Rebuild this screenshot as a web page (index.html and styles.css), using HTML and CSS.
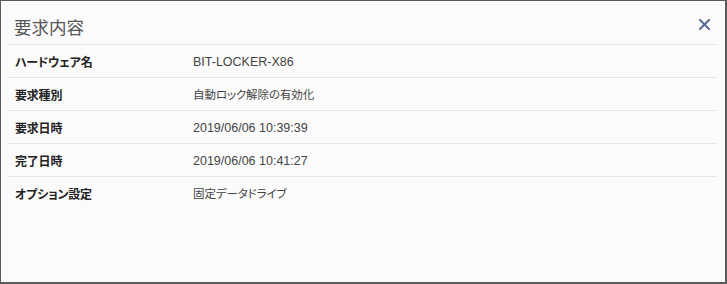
FILE: index.html
```html
<!DOCTYPE html>
<html lang="ja">
<head>
<meta charset="utf-8">
<title>要求内容</title>
<link rel="stylesheet" href="styles.css">
</head>
<body>
<div class="modal">
  <div class="modal-header">
    <h4 class="modal-title">要求内容</h4>
    <span class="close" aria-label="閉じる">
      <svg width="11" height="11" viewBox="0 0 11 11"><path d="M1 1 L10 10 M10 1 L1 10" stroke="#5a6b95" stroke-width="2" stroke-linecap="square" fill="none"/></svg>
    </span>
  </div>
  <div class="table">
    <div class="row"><div class="cell label">ハードウェア名</div><div class="cell value">BIT-LOCKER-X86</div></div>
    <div class="row"><div class="cell label">要求種別</div><div class="cell value jp">自動ロック解除の有効化</div></div>
    <div class="row"><div class="cell label">要求日時</div><div class="cell value">2019/06/06 10:39:39</div></div>
    <div class="row"><div class="cell label">完了日時</div><div class="cell value">2019/06/06 10:41:27</div></div>
    <div class="row last"><div class="cell label">オプション設定</div><div class="cell value jp">固定データドライブ</div></div>
  </div>
</div>
</body>
</html>
```

FILE: styles.css
```css
html, body {
  margin: 0;
  padding: 0;
  background: #fbfbfb;
}
.modal {
  box-sizing: border-box;
  width: 727px;
  height: 284px;
  border-style: solid;
  border-color: #5a5a5a;
  border-width: 1px 2px 2px 1px;
  background: #fbfbfb;
  padding: 0 8px 0 6px;
  font-family: "Liberation Sans", "Noto Sans CJK JP", sans-serif;
  font-size: 12.5px;
  color: #333;
}
.modal-header {
  height: 43px;
  border-bottom: 1px solid #e6e6e6;
  display: flex;
  align-items: center;
  justify-content: space-between;
  padding: 0 7px 0 7px;
}
.modal-title {
  margin: 0;
  padding-top: 8px;
  font-family: "Noto Sans CJK JP", sans-serif;
  font-weight: normal;
  font-size: 17.5px;
  color: #555;
  font-feature-settings: "palt";
}
.close {
  display: flex;
  width: 11px;
  height: 11px;
  margin-top: 4px;
}
.row {
  display: grid;
  grid-template-columns: 178px 1fr;
  height: 32px;
  border-bottom: 1px solid #e6e6e6;
  align-items: center;
}
.row.last {
  border-bottom: none;
}
.cell {
  padding-left: 8px;
}
.label {
  font-family: "Noto Sans CJK JP", sans-serif;
  font-weight: bold;
  font-size: 12px;
  font-feature-settings: "palt";
  letter-spacing: -0.2px;
  color: #222;
}
.value {
  color: #444;
  padding-top: 1px;
}
.value.jp {
  font-family: "Noto Sans CJK JP", sans-serif;
  font-size: 11.5px;
  font-feature-settings: "palt";
  letter-spacing: -0.1px;
  padding-top: 0;
}
```
